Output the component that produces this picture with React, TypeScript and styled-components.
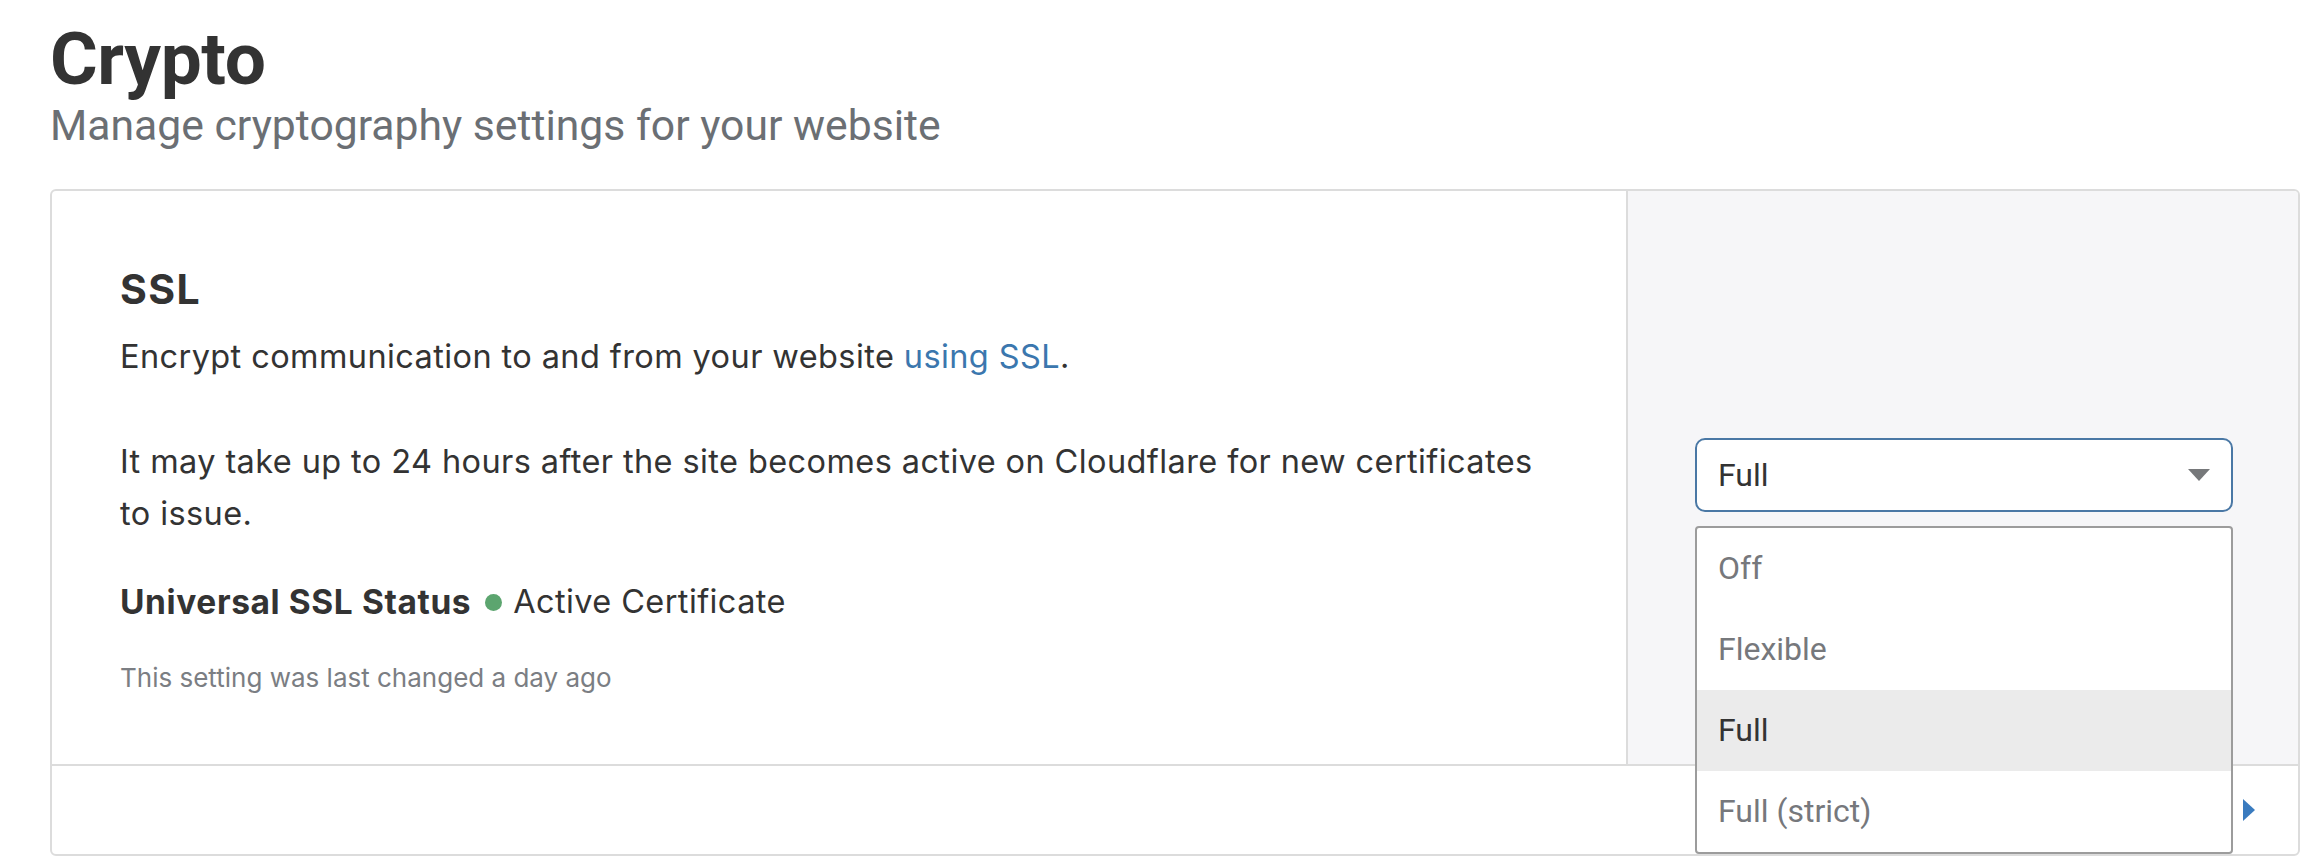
import React from "react";
import styled, { createGlobalStyle } from "styled-components";

const GlobalStyle = createGlobalStyle`
  *, *::before, *::after { box-sizing: border-box; }
  html, body { margin: 0; padding: 0; background: #ffffff; }
  body {
    font-family: Inter, Roboto, "Liberation Sans", Arial, sans-serif;
    color: #333333;
    -webkit-font-smoothing: antialiased;
  }
`;

const Page = styled.main`
  padding: 23px 10px 0 50px;
`;

const Title = styled.h1`
  margin: 0;
  font-family: Roboto, "Liberation Sans", Arial, sans-serif;
  font-size: 73px;
  line-height: 72px;
  font-weight: 700;
  color: #333333;
  letter-spacing: -0.4px;
`;

const Subtitle = styled.p`
  margin: 5px 0 0;
  font-family: Roboto, "Liberation Sans", Arial, sans-serif;
  font-size: 42.7px;
  line-height: 50px;
  font-weight: 400;
  color: #6b6f74;
`;

const Card = styled.section`
  margin-top: 39px;
  border: 2px solid #dcdcdc;
  border-radius: 6px;
  background: #ffffff;
`;

const CardBody = styled.div`
  display: flex;
  border-bottom: 2px solid #dcdcdc;
`;

const Content = styled.div`
  flex: 1;
  min-width: 0;
  padding: 74px 76px 66px 68px;
`;

const Heading = styled.h2`
  margin: 0;
  font-size: 41px;
  line-height: 48px;
  font-weight: 700;
  letter-spacing: 1.4px;
  color: #333333;
`;

const Text = styled.p<{ $gap: number }>`
  margin: ${(p) => p.$gap}px 0 0;
  font-size: 32.5px;
  line-height: 52px;
  letter-spacing: 0.4px;
  color: #333333;
`;

const Link = styled.a`
  color: #3b77ae;
  text-decoration: none;
`;

const StatusLine = styled.div`
  margin-top: 36px;
  display: flex;
  align-items: center;
  font-size: 32.5px;
  line-height: 52px;
  letter-spacing: 0.4px;
  color: #333333;
`;

const StatusLabel = styled.strong`
  font-weight: 700;
  font-size: 33.5px;
  letter-spacing: 0.6px;
`;

const Dot = styled.span`
  width: 17px;
  height: 17px;
  border-radius: 50%;
  background: #5ca56f;
  margin: 0 11px 0 14px;
  flex: none;
`;

const Meta = styled.p`
  margin: 30px 0 0;
  font-size: 26px;
  line-height: 40px;
  color: #7b7e83;
`;

const Panel = styled.aside`
  width: 672px;
  flex: none;
  border-left: 2px solid #dcdcdc;
  background: #f6f6f8;
  display: flex;
  align-items: center;
  padding: 0 65px 0 67px;
  border-top-right-radius: 4px;
`;

const SelectWrap = styled.div`
  position: relative;
  width: 100%;
  margin-bottom: 6px;
`;

const SelectBox = styled.div`
  height: 74px;
  border: 2px solid #4a78a5;
  border-radius: 10px;
  background: #ffffff;
  display: flex;
  align-items: center;
  justify-content: space-between;
  padding: 0 21px 0 21px;
  font-family: Roboto, "Liberation Sans", Arial, sans-serif;
  font-size: 32px;
  color: #333333;
`;

const Menu = styled.ul`
  position: absolute;
  top: calc(100% + 14px);
  left: 0;
  right: 0;
  margin: 0;
  padding: 0;
  list-style: none;
  background: #ffffff;
  border: 2px solid #9c9c9c;
  border-radius: 4px;
  z-index: 2;
  overflow: hidden;
`;

const MenuItem = styled.li<{ $active?: boolean }>`
  height: 81px;
  display: flex;
  align-items: center;
  padding-left: 21px;
  font-family: Roboto, "Liberation Sans", Arial, sans-serif;
  font-size: 32px;
  color: ${(p) => (p.$active ? "#333333" : "#76787c")};
  background: ${(p) => (p.$active ? "#ebebeb" : "transparent")};
`;

const Footer = styled.div`
  height: 88px;
  display: flex;
  align-items: center;
  justify-content: flex-end;
  padding-right: 43px;
  gap: 24px;
`;

const Help = styled.span`
  font-size: 32px;
  color: #3b77ae;
`;

const options = ["Off", "Flexible", "Full", "Full (strict)"];

export default function App() {
  const selected = "Full";
  return (
    <>
      <GlobalStyle />
      <Page>
        <Title>Crypto</Title>
        <Subtitle>Manage cryptography settings for your website</Subtitle>
        <Card>
          <CardBody>
            <Content>
              <Heading>SSL</Heading>
              <Text $gap={18}>
                Encrypt communication to and from your website <Link href="#">using SSL</Link>.
              </Text>
              <Text $gap={53}>
                It may take up to 24 hours after the site becomes active on Cloudflare for new certificates to issue.
              </Text>
              <StatusLine>
                <StatusLabel>Universal SSL Status</StatusLabel>
                <Dot />
                <span>Active Certificate</span>
              </StatusLine>
              <Meta>This setting was last changed a day ago</Meta>
            </Content>
            <Panel>
              <SelectWrap>
                <SelectBox>
                  <span>{selected}</span>
                  <svg width="22" height="12" viewBox="0 0 22 12">
                    <polygon points="0,0 22,0 11,12" fill="#76787a" />
                  </svg>
                </SelectBox>
                <Menu>
                  {options.map((o) => (
                    <MenuItem key={o} $active={o === selected}>
                      {o}
                    </MenuItem>
                  ))}
                </Menu>
              </SelectWrap>
            </Panel>
          </CardBody>
          <Footer>
            <Help>Help</Help>
            <svg width="12" height="22" viewBox="0 0 12 22">
              <polygon points="0,0 12,11 0,22" fill="#3a7bbf" />
            </svg>
          </Footer>
        </Card>
      </Page>
    </>
  );
}
